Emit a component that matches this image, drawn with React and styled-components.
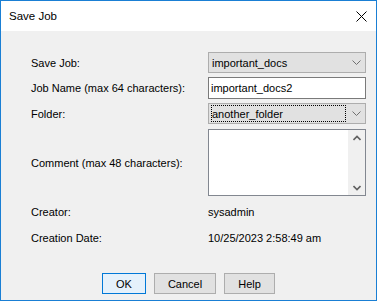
import React from "react";
import styled, { createGlobalStyle, css } from "styled-components";

const GlobalStyle = createGlobalStyle`
  html, body { margin: 0; padding: 0; background: #ffffff; }
  * { box-sizing: border-box; }
`;

const Window = styled.div`
  width: 377px;
  height: 301px;
  border: 1px solid #1a7fd4;
  background: #f0f0f0;
  display: flex;
  flex-direction: column;
  font-family: "Liberation Sans", Arial, sans-serif;
  font-size: 11px;
  color: #000;
`;

const TitleBar = styled.div`
  height: 30px;
  background: #ffffff;
  display: flex;
  align-items: center;
  justify-content: space-between;
  padding: 0 9px 0 8px;
  flex: none;
`;

const Title = styled.span`
  font-size: 11.5px;
  color: #000;
`;

const CloseButton = styled.span`
  display: flex;
  width: 12px;
  height: 12px;
  align-items: center;
  justify-content: center;
`;

const Body = styled.div`
  flex: 1;
  display: flex;
  flex-direction: column;
  padding: 21px 10px 6px 30px;
`;

const FormGrid = styled.div`
  display: grid;
  grid-template-columns: 177px 158px;
  grid-template-rows: 21px 22px 22px 67px 24px 20px;
  row-gap: 4px;
`;

const Label = styled.div`
  align-self: center;
  white-space: nowrap;
`;

const Value = styled.div`
  align-self: center;
  white-space: nowrap;
`;

const Combo = styled.div`
  height: 21px;
  border: 1px solid #adadad;
  background: #e1e1e1;
  display: flex;
  align-items: center;
  padding-left: 2px;
`;

const ComboText = styled.span`
  flex: 1;
  height: 17px;
  display: flex;
  align-items: center;
  padding-left: 1px;
  ${(p) =>
    p.$focused &&
    css`
      outline: 1px dotted #000;
      outline-offset: -1px;
      margin-right: 2px;
    `}
`;

const ComboArrow = styled.span`
  width: 17px;
  display: flex;
  justify-content: center;
  align-items: center;
  flex: none;
`;

const TextBox = styled.div`
  height: 22px;
  border: 1px solid #7a7a7a;
  background: #ffffff;
  display: flex;
  align-items: center;
  padding-left: 2px;
`;

const TextArea = styled.div`
  height: 67px;
  border: 1px solid #828790;
  background: #ffffff;
  display: flex;
  justify-content: flex-end;
`;

const ScrollBar = styled.div`
  width: 17px;
  background: #f0f0f0;
  display: flex;
  flex-direction: column;
  justify-content: space-between;
  align-items: center;
  padding: 5px 0 4px;
`;

const ButtonRow = styled.div`
  margin-top: auto;
  display: flex;
  justify-content: center;
  gap: 8px;
  margin-left: -20px;
`;

const Button = styled.div`
  height: 21px;
  width: ${(p) => p.$w}px;
  display: flex;
  align-items: center;
  justify-content: center;
  border: 1px solid ${(p) => (p.$default ? "#0078d7" : "#adadad")};
  background: ${(p) => (p.$default ? "#e5f1fb" : "#e1e1e1")};
`;

const Chevron = ({ up, color = "#606060" }) => (
  <svg width="9" height="5" viewBox="0 0 9 5">
    <path
      d={up ? "M0.5 4.5 L4.5 0.5 L8.5 4.5" : "M0.5 0.5 L4.5 4.5 L8.5 0.5"}
      fill="none"
      stroke={color}
      strokeWidth="1"
    />
  </svg>
);

const ScrollArrow = ({ up }) => (
  <svg width="8" height="6" viewBox="0 0 8 6">
    <path
      d={up ? "M0.5 5 L4 1.5 L7.5 5" : "M0.5 1 L4 4.5 L7.5 1"}
      fill="none"
      stroke="#606060"
      strokeWidth="1.6"
    />
  </svg>
);

export default function App() {
  return (
    <>
      <GlobalStyle />
      <Window>
        <TitleBar>
          <Title>Save Job</Title>
          <CloseButton>
            <svg width="11" height="11" viewBox="0 0 11 11">
              <path d="M0.5 0.5 L10.5 10.5 M10.5 0.5 L0.5 10.5" stroke="#000" strokeWidth="1" />
            </svg>
          </CloseButton>
        </TitleBar>
        <Body>
          <FormGrid>
            <Label>Save Job:</Label>
            <Combo>
              <ComboText>important_docs</ComboText>
              <ComboArrow>
                <Chevron color="#707070" />
              </ComboArrow>
            </Combo>

            <Label>Job Name (max 64 characters):</Label>
            <TextBox>important_docs2</TextBox>

            <Label>Folder:</Label>
            <Combo>
              <ComboText $focused>another_folder</ComboText>
              <ComboArrow>
                <Chevron color="#707070" />
              </ComboArrow>
            </Combo>

            <Label>Comment (max 48 characters):</Label>
            <TextArea>
              <ScrollBar>
                <ScrollArrow up />
                <ScrollArrow />
              </ScrollBar>
            </TextArea>

            <Label>Creator:</Label>
            <Value>sysadmin</Value>

            <Label>Creation Date:</Label>
            <Value>10/25/2023 2:58:49 am</Value>
          </FormGrid>
          <ButtonRow>
            <Button $default $w={44}>OK</Button>
            <Button $w={62}>Cancel</Button>
            <Button $w={51}>Help</Button>
          </ButtonRow>
        </Body>
      </Window>
    </>
  );
}
